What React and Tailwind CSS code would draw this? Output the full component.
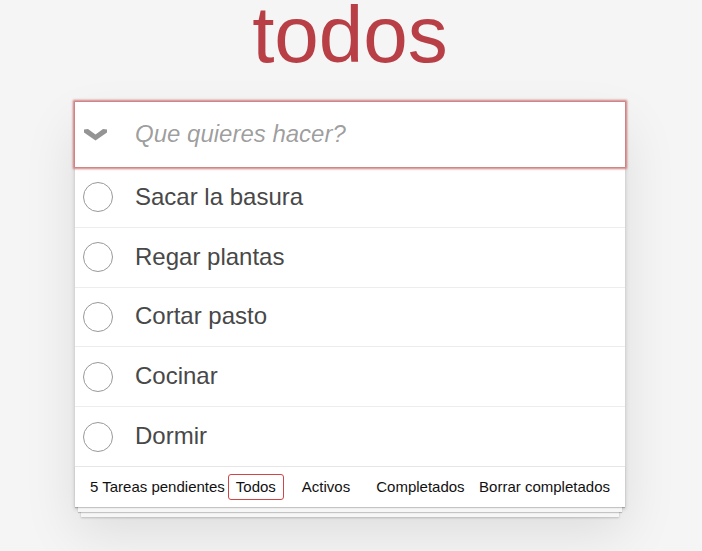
import React from "react";

const todos = ["Sacar la basura", "Regar plantas", "Cortar pasto", "Cocinar", "Dormir"];

export default function App() {
  return (
    <div
      className="min-h-[551px] bg-[#f5f5f5] text-[#111111] pr-[2px]"
      style={{ fontFamily: '"Liberation Sans", Arial, Helvetica, sans-serif' }}
    >
      <h1 className="text-center text-[80px] leading-[70px] font-normal text-[#b83f45] pt-0 h-[102px]">
        todos
      </h1>
      <section className="w-[550px] mx-auto bg-white shadow-[0_2px_4px_0_rgba(0,0,0,0.2),0_25px_50px_0_rgba(0,0,0,0.1)]">
        <div className="relative h-[65px] flex items-center shadow-[0_0_2px_2px_#cf7d7d]">
          <div className="w-[60px] h-full flex items-center pl-[9px]">
            <svg width="23" height="12" viewBox="0 0 23 12">
              <polygon points="0,0.5 4,0 11.5,5.5 19,0 23,0.5 23,3.5 11.5,11.5 0,3.5" fill="#949494" />
            </svg>
          </div>
          <span className="text-[24px] italic text-[rgba(0,0,0,0.4)] leading-[29px] mb-[2px]">Que quieres hacer?</span>
        </div>
        <ul className="border-t border-[#e6e6e6]">
          {todos.map((t) => (
            <li key={t} className="flex items-center border-b border-[#ededed] h-[59.8px]">
              <div className="w-[60px] flex items-center pl-[8px]">
                <div className="w-[30px] h-[30px] rounded-full border border-[#999999]" />
              </div>
              <span className="text-[24px] leading-[29px] text-[#484848] mb-[2px]">{t}</span>
            </li>
          ))}
        </ul>
        <footer className="h-[41px] -mt-px border-t border-[#e6e6e6] flex items-center justify-between px-[15px] text-[15px] leading-[20px] text-[#111111] shadow-[0_1px_1px_rgba(0,0,0,0.2),0_8px_0_-3px_#f6f6f6,0_9px_1px_-3px_rgba(0,0,0,0.2),0_16px_0_-6px_#f6f6f6,0_17px_2px_-6px_rgba(0,0,0,0.2)]">
          <div className="flex items-center">
            <span>5 Tareas pendientes</span>
            <ul className="flex items-center gap-[10px] ml-[3px]">
              <li className="px-[7px] py-[2px] border border-[#ce4646] rounded-[3px]">Todos</li>
              <li className="px-[7px] py-[2px] border border-transparent rounded-[3px]">Activos</li>
              <li className="px-[7px] py-[2px] border border-transparent rounded-[3px]">Completados</li>
            </ul>
          </div>
          <span>Borrar completados</span>
        </footer>
      </section>
    </div>
  );
}
